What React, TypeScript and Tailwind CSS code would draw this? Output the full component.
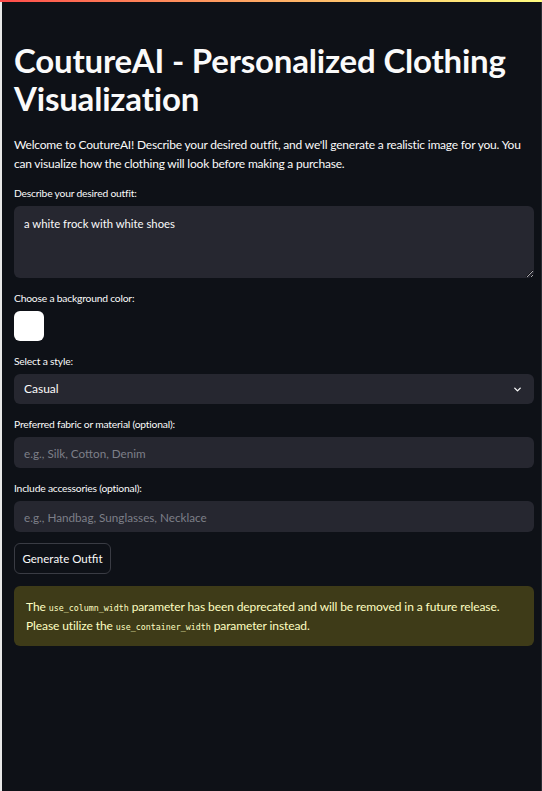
import { ChevronDown } from "lucide-react";

const font = { fontFamily: "Lato, 'Noto Sans', sans-serif" };
const mono = { fontFamily: "'DejaVu Sans Mono', monospace" };

function Label({ text }: { text: string }) {
  return (
    <div className="h-[14px] mb-[6px] text-[10.3px] leading-[14px] tracking-[-0.2px] text-[#fafafa]">{text}</div>
  );
}

export default function App() {
  return (
    <div className="min-h-screen w-full bg-[#0e1117] flex flex-col text-[#fafafa]" style={font}>
      <div className="h-[2px] w-full bg-gradient-to-r from-[#ff4b4b] to-[#fffd80]" />
      <div className="flex-1 border-l-2 border-l-[#e8e8e8] border-r border-r-[#2a2d35] pl-3 pr-[7px] pt-[39px] pb-10">
        <h1 className="text-[33px] font-bold leading-[38px] tracking-[-0.2px]">
          CoutureAI - Personalized Clothing Visualization
        </h1>

        <p className="mt-[18px] text-[12px] leading-[19px] tracking-[-0.2px]">
          Welcome to CoutureAI! Describe your desired outfit, and we'll generate a realistic image for you. You
          can visualize how the clothing will look before making a purchase.
        </p>

        <div className="mt-[13px]">
          <Label text="Describe your desired outfit:" />
          <textarea
            defaultValue="a white frock with white shoes"
            className="block w-full h-[72px] rounded-md bg-[#262730] px-[10px] py-[9px] text-[11.3px] leading-[18px] text-[#fafafa] outline-none"
          />
        </div>

        <div className="mt-[13px]">
          <Label text="Choose a background color:" />
          <div className="w-[30px] h-[30px] rounded-[6px] bg-white" />
        </div>

        <div className="mt-[13px]">
          <Label text="Select a style:" />
          <div className="h-[30px] rounded-md bg-[#262730] flex items-center justify-between pl-[10px] pr-[11px]">
            <span className="text-[12px]">Casual</span>
            <ChevronDown className="w-[11px] h-[11px] text-[#fafafa]" strokeWidth={3} />
          </div>
        </div>

        <div className="mt-[13px]">
          <Label text="Preferred fabric or material (optional):" />
          <input
            placeholder="e.g., Silk, Cotton, Denim"
            className="block w-full h-[31px] rounded-md bg-[#262730] px-[10px] text-[11.7px] text-[#fafafa] placeholder:text-[#7d7f88] outline-none"
          />
        </div>

        <div className="mt-[13px]">
          <Label text="Include accessories (optional):" />
          <input
            placeholder="e.g., Handbag, Sunglasses, Necklace"
            className="block w-full h-[31px] rounded-md bg-[#262730] px-[10px] text-[11.7px] text-[#fafafa] placeholder:text-[#7d7f88] outline-none"
          />
        </div>

        <button className="mt-[11px] h-[31px] w-[97px] rounded-md border border-[#3a3c44] bg-[#0e1117] text-[11.5px] text-[#fafafa]">
          Generate Outfit
        </button>

        <div className="mt-[12px] rounded-md bg-[#3e3b18] px-3 py-[11px] text-[12px] leading-[19px] tracking-[-0.1px] text-[#ffffc2]">
          The{" "}
          <code className="text-[8.3px] leading-none tracking-normal" style={mono}>
            use_column_width
          </code>{" "}
          parameter has been deprecated and will be removed in a future release.
          <br />
          Please utilize the{" "}
          <code className="text-[8.3px] leading-none tracking-normal" style={mono}>
            use_container_width
          </code>{" "}
          parameter instead.
        </div>
      </div>
    </div>
  );
}
